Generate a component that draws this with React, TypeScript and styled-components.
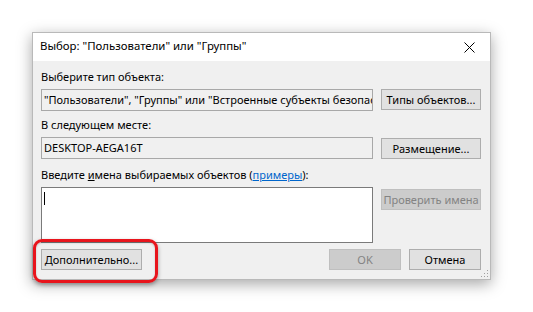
import React from 'react';
import styled, { createGlobalStyle } from 'styled-components';

const GlobalStyle = createGlobalStyle`
  html, body {
    margin: 0;
    padding: 0;
    background: #ffffff;
  }
  body {
    font-family: 'Noto Sans', 'Liberation Sans', sans-serif;
    font-size: 11px;
    color: #000000;
  }
`;

const Page = styled.div`
  width: 533px;
  height: 312px;
  padding: 32px 0 0 32px;
  box-sizing: border-box;
`;

const Window = styled.div`
  position: relative;
  width: 459px;
  height: 248px;
  display: flex;
  flex-direction: column;
  background: #f0f0f0;
  border: 1px solid #b9b9b9;
  box-sizing: border-box;
  box-shadow: 0 4px 14px rgba(0, 0, 0, 0.35);
`;

const TitleBar = styled.div`
  height: 28px;
  flex-shrink: 0;
  display: flex;
  align-items: center;
  justify-content: space-between;
  padding: 0 7px;
  background: #ffffff;
`;

const Title = styled.div`
  font-size: 11.4px;
  line-height: 16px;
  margin-top: -2px;
`;

const CloseButton = styled.div`
  width: 28px;
  height: 26px;
  display: flex;
  align-items: center;
  justify-content: center;
`;

const Body = styled.div`
  flex: 1;
  display: flex;
  flex-direction: column;
  padding: 8px 9px 0 8px;
`;

const Form = styled.div`
  display: grid;
  grid-template-columns: 332px 100px;
  column-gap: 8px;
  align-items: start;
`;

const Label = styled.div<{ $top?: number }>`
  grid-column: 1 / 3;
  line-height: 16px;
  height: 16px;
  white-space: nowrap;
  margin: ${p => p.$top ?? 0}px 0 4px;
`;

const Key = styled.span`
  text-decoration: underline;
`;

const Link = styled.span`
  color: #0066cc;
  text-decoration: underline;
`;

const Field = styled.div<{ $multi?: boolean }>`
  height: ${p => (p.$multi ? 56 : 22)}px;
  box-sizing: border-box;
  border: 1px solid ${p => (p.$multi ? '#7a7a7a' : '#a8a8a8')};
  background: ${p => (p.$multi ? '#ffffff' : '#f0f0f0')};
  padding: 2px 2px;
  line-height: 16px;
  white-space: nowrap;
  overflow: hidden;
`;

const Caret = styled.div`
  width: 1px;
  height: 13px;
  margin-top: 2px;
  background: #000000;
`;

const Button = styled.div<{ $disabled?: boolean; $width?: number; $top?: number }>`
  width: ${p => (p.$width ? `${p.$width}px` : '100%')};
  height: 21px;
  margin-top: ${p => p.$top ?? 0}px;
  box-sizing: border-box;
  display: flex;
  align-items: center;
  justify-content: center;
  background: ${p => (p.$disabled ? '#cccccc' : '#e1e1e1')};
  border: 1px solid ${p => (p.$disabled ? '#bfbfbf' : '#adadad')};
  color: ${p => (p.$disabled ? '#838383' : '#000000')};
  white-space: nowrap;
  line-height: 16px;
`;

const Footer = styled.div`
  display: flex;
  align-items: center;
  margin-top: 6px;
  gap: 8px;
`;

const Spacer = styled.div`
  flex: 1;
`;

const Highlight = styled.div`
  position: absolute;
  left: 0px;
  top: 206px;
  width: 125px;
  height: 44px;
  box-sizing: border-box;
  border: 3px solid #e8141c;
  border-radius: 9px;
  box-shadow: 0 2px 4px rgba(0, 0, 0, 0.35), inset 0 1px 2px rgba(0, 0, 0, 0.2);
  pointer-events: none;
`;

const Grip = styled.svg`
  position: absolute;
  right: 1px;
  bottom: 1px;
`;

const gripDots = [
  [8, 2], [8, 5], [5, 5], [8, 8], [5, 8], [2, 8],
];

const App: React.FC = () => {
  return (
    <Page>
      <GlobalStyle />
      <Window>
        <TitleBar>
          <Title>Выбор: "Пользователи" или "Группы"</Title>
          <CloseButton>
            <svg width="11" height="11" viewBox="0 0 11 11">
              <path d="M0.5 0.5 L10.5 10.5 M10.5 0.5 L0.5 10.5" stroke="#000" strokeWidth="1" />
            </svg>
          </CloseButton>
        </TitleBar>
        <Body>
          <Form>
            <Label>Выберите тип объекта:</Label>
            <Field>"Пользователи", "Группы" или "Встроенные субъекты безопасности"</Field>
            <Button>Типы объектов...</Button>

            <Label $top={6}>В следующем месте:</Label>
            <Field>DESKTOP-AEGA16T</Field>
            <Button $top={1}>Размещение...</Button>

            <Label $top={8}>
              Введите <Key>и</Key>мена выбираемых объектов (<Link>примеры</Link>):
            </Label>
            <Field $multi>
              <Caret />
            </Field>
            <Button $disabled $top={2}>Проверить имена</Button>
          </Form>
          <Footer>
            <Button $width={101}>Дополнительно...</Button>
            <Spacer />
            <Button $disabled $width={72}>OK</Button>
            <Button $width={72}>Отмена</Button>
          </Footer>
        </Body>
        <Highlight />
        <Grip width="10" height="10" viewBox="0 0 10 10">
          {gripDots.map(([x, y], i) => (
            <rect key={i} x={x} y={y} width="1" height="1" fill="#a0a0a0" />
          ))}
        </Grip>
      </Window>
    </Page>
  );
};

export default App;
